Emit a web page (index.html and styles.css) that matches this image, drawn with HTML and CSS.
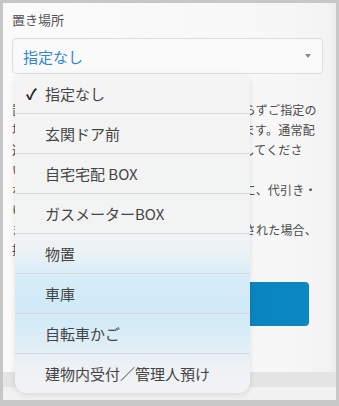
FILE: index.html
```html
<!DOCTYPE html>
<html lang="ja">
<head>
    <meta charset="UTF-8">
    <meta name="viewport" content="width=device-width, initial-scale=1.0">
    <title>置き場所</title>
    <link rel="stylesheet" href="styles.css">
</head>
<body>
<div class="panel">
    <div class="card">
        <p class="field-label">置き場所</p>
        <div class="select-box">
            <span class="select-value">指定なし</span>
            <span class="select-caret"></span>
        </div>
        <p class="notice">
            置き配は、お客様のご在宅・不在にかかわらずご指定の<br>
            場所へお荷物を置いて、配達完了といたします。通常配<br>
            達と同様に扱われますので、盗難にご注意してくださ<br>
            い。<br>
            なお、クール便・着払いの各お荷物ならびに、代引き・<br>
            ゆうパック等は対象外です。<br>
            また、指定場所にお荷物が置けないと判断された場合、<br>
            持ち戻りとなります。
        </p>
        <button class="save-button">保存する</button>
    </div>
    <div class="footer-band"></div>
    <div class="footer-light"></div>

    <ul class="dropdown">
        <li class="dropdown-item selected"><span class="check">✓</span>指定なし</li>
        <li class="dropdown-item">玄関ドア前</li>
        <li class="dropdown-item">自宅宅配 BOX</li>
        <li class="dropdown-item">ガスメーターBOX</li>
        <li class="dropdown-item">物置</li>
        <li class="dropdown-item">車庫</li>
        <li class="dropdown-item">自転車かご</li>
        <li class="dropdown-item">建物内受付／管理人預け</li>
    </ul>
</div>
</body>
</html>
```

FILE: styles.css
```css
body {
    margin: 0;
    padding: 3px 3px 6px 3px;
    background-color: #c7c7c7;
    font-family: "Noto Sans CJK JP", "Noto Sans", sans-serif;
    height: 406px;
    box-sizing: border-box;
    overflow: hidden;
}

.panel {
    position: relative;
    height: 397px;
    background-color: #ededed;
    display: flex;
    flex-direction: column;
}

.card {
    width: 330px;
    height: 369px;
    box-sizing: border-box;
    padding: 0 7px 0 9px;
    background: linear-gradient(to right, #fbfbfb, #f7f7f7 85%, #f3f3f3);
    border-right: 3px solid #f0f0f0;
}

.field-label {
    margin: 0;
    padding-top: 7px;
    height: 28px;
    box-sizing: border-box;
    font-size: 13px;
    line-height: 20px;
    color: #555555;
}

.select-box {
    display: flex;
    align-items: center;
    justify-content: space-between;
    height: 36px;
    margin-top: 7px;
    box-sizing: border-box;
    padding: 0 11px 0 10px;
    background-color: #fafafa;
    border: 1px solid #dcdcdc;
    border-radius: 4px;
}

.select-value {
    font-size: 15px;
    color: #2f84dc;
}

.select-caret {
    width: 0;
    height: 0;
    border-left: 3px solid transparent;
    border-right: 3px solid transparent;
    border-top: 4px solid #8c8c8c;
}

.notice {
    margin: 26px 0 0 0;
    font-size: 12px;
    letter-spacing: 0.2px;
    line-height: 20px;
    color: #4a4a4a;
    white-space: nowrap;
}

.save-button {
    display: block;
    width: 283px;
    height: 44px;
    margin: 22px 0 0 14px;
    border: none;
    border-radius: 4px;
    background: linear-gradient(to right, #0a76b1, #0a88c4);
    color: #ffffff;
    font-family: inherit;
    font-size: 15px;
}

.footer-band {
    height: 15px;
    background-color: #e4e4e4;
}

.footer-light {
    height: 13px;
    background-color: #f1f1f1;
}

.dropdown {
    position: absolute;
    left: 12px;
    top: 71px;
    width: 235px;
    margin: 0;
    padding: 0;
    list-style: none;
    border-radius: 9px 9px 12px 12px;
    overflow: hidden;
    background: linear-gradient(to bottom,
        #f4f4f4 0%,
        #f2f3f3 50%,
        #e9f1f5 57%,
        #d7edf8 63%,
        #d0eaf7 72%,
        #d6ecf7 80%,
        #e3eff5 87%,
        #eef1f4 92%,
        #f2f3f5 100%);
    box-shadow: 0 2px 6px rgba(0, 0, 0, 0.1);
}

.dropdown-item {
    height: 39px;
    line-height: 39px;
    padding-left: 30px;
    border-top: 1px solid #d5d9dc;
    font-size: 15px;
    color: #444444;
    position: relative;
}

.dropdown-item:first-child {
    border-top: none;
}

.check {
    position: absolute;
    left: 11px;
    top: 0;
    font-size: 15px;
    font-weight: bold;
    color: #222222;
}
```
